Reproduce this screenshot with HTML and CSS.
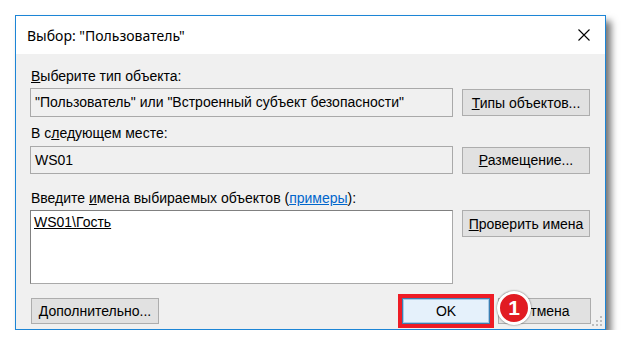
FILE: index.html
```html
<!DOCTYPE html>
<html lang="ru">
<head>
    <meta charset="UTF-8">
    <title>Выбор: "Пользователь"</title>
    <link rel="stylesheet" href="styles.css">
</head>
<body>
    <div class="dialog">
        <div class="titlebar">
            <span class="title">Выбор: "Пользователь"</span>
            <svg class="close" width="12" height="12" viewBox="0 0 12 12">
                <path d="M0.5 0.5 L11.5 11.5 M11.5 0.5 L0.5 11.5" stroke="#000" stroke-width="1.1" fill="none"/>
            </svg>
        </div>

        <div class="content">
            <div class="section">
                <label class="caption"><u>В</u>ыберите тип объекта:</label>
                <div class="field">"Пользователь" или "Встроенный субъект безопасности"</div>
                <button class="btn"><u>Т</u>ипы объектов...</button>
            </div>

            <div class="section">
                <label class="caption">В с<u>л</u>едующем месте:</label>
                <div class="field">WS01</div>
                <button class="btn"><u>Р</u>азмещение...</button>
            </div>

            <div class="section names">
                <label class="caption">Введите <u>и</u>мена выбираемых объектов (<a href="#">примеры</a>):</label>
                <div class="names-box"><u>WS01\Гость</u></div>
                <button class="btn"><u>П</u>роверить имена</button>
            </div>

            <div class="footer">
                <button class="btn"><u>Д</u>ополнительно...</button>
                <div class="actions">
                    <button class="btn btn-ok">OK</button>
                    <button class="btn">Отмена</button>
                    <span class="badge">1</span>
                </div>
            </div>

            <!-- size grip -->
            <svg class="grip" width="10" height="10" viewBox="0 0 10 10">
                <rect x="8" y="0" width="2" height="2" fill="#bdbdbd"/>
                <rect x="4" y="4" width="2" height="2" fill="#bdbdbd"/>
                <rect x="8" y="4" width="2" height="2" fill="#bdbdbd"/>
                <rect x="0" y="8" width="2" height="2" fill="#bdbdbd"/>
                <rect x="4" y="8" width="2" height="2" fill="#bdbdbd"/>
                <rect x="8" y="8" width="2" height="2" fill="#bdbdbd"/>
            </svg>
        </div>
    </div>
</body>
</html>
```

FILE: styles.css
```css
body {
    margin: 0;
    padding: 15px 0 0 15px;
    background: #ffffff;
    font-family: 'Liberation Sans', Arial, sans-serif;
    font-size: 14px;
    color: #000;
}

/* Window frame */
.dialog {
    width: 589px;
    height: 313px;
    border: 1px solid #1c85d6;
    background: #f0f0f0;
    box-shadow: 5px 6px 7px rgba(0, 0, 0, 0.55);
    display: flex;
    flex-direction: column;
}

.titlebar {
    height: 38px;
    background: #fff;
    display: flex;
    align-items: center;
    justify-content: space-between;
    padding: 0 15px 0 11px;
    flex-shrink: 0;
}

.title {
    font-family: 'Noto Sans', 'Open Sans', sans-serif;
    font-size: 14px;
    margin-top: 1px;
}

.content {
    position: relative;
    flex: 1;
    padding: 14px 14px 0 14px;
}

.section {
    display: grid;
    grid-template-columns: 423px 128px;
    column-gap: 9px;
    align-items: center;
}

.caption {
    grid-column: 1 / 3;
    height: 16px;
    line-height: 16px;
    margin-bottom: 4px;
    padding-left: 1px;
}

.field {
    height: 27px;
    line-height: 27px;
    border: 1px solid #a9a9a9;
    padding-left: 4px;
    white-space: nowrap;
    overflow: hidden;
}

.section + .section {
    margin-top: 8px;
}

.section:nth-child(2) .field {
    height: 26px;
    line-height: 26px;
}

.section:nth-child(2) .caption {
    margin-bottom: 5px;
}

.section.names {
    margin-top: 16px;
    align-items: start;
}

.names-box {
    height: 66px;
    background: #fff;
    border: 1px solid #a9a9a9;
    border-top-color: #808080;
    border-left-color: #808080;
    padding: 3px 3px;
}

.btn {
    height: 27px;
    background: #e1e1e1;
    border: 1px solid #adadad;
    font-family: 'Liberation Sans', Arial, sans-serif;
    font-size: 14px;
    color: #000;
    padding: 0;
}

.section .btn {
    width: 128px;
}

a {
    color: #0066cc;
}

.footer {
    margin-top: 14px;
    display: flex;
    justify-content: space-between;
    align-items: center;
    padding-left: 1px;
}

.footer > .btn {
    width: 128px;
    height: 26px;
}

.actions {
    position: relative;
    display: flex;
    align-items: center;
    gap: 8px;
}

.actions .btn {
    width: 93px;
    height: 26px;
}

.btn-ok {
    width: 88px !important;
    background: #e5f1fb;
    border: 1px solid #3c7fb1;
    box-shadow: inset 0 0 0 1px #a8cbe8;
    outline: 4px solid #ee1c25;
}

/* annotation marker */
.badge {
    position: absolute;
    left: 95px;
    top: -7px;
    width: 28px;
    height: 28px;
    border-radius: 50%;
    background: #e11b22;
    border: 3px solid #fff;
    box-shadow: 0 0 2px rgba(0, 0, 0, 0.6);
    color: #fff;
    font-weight: bold;
    font-size: 21px;
    line-height: 28px;
    text-align: center;
}

.grip {
    position: absolute;
    right: 3px;
    bottom: 3px;
}
```
